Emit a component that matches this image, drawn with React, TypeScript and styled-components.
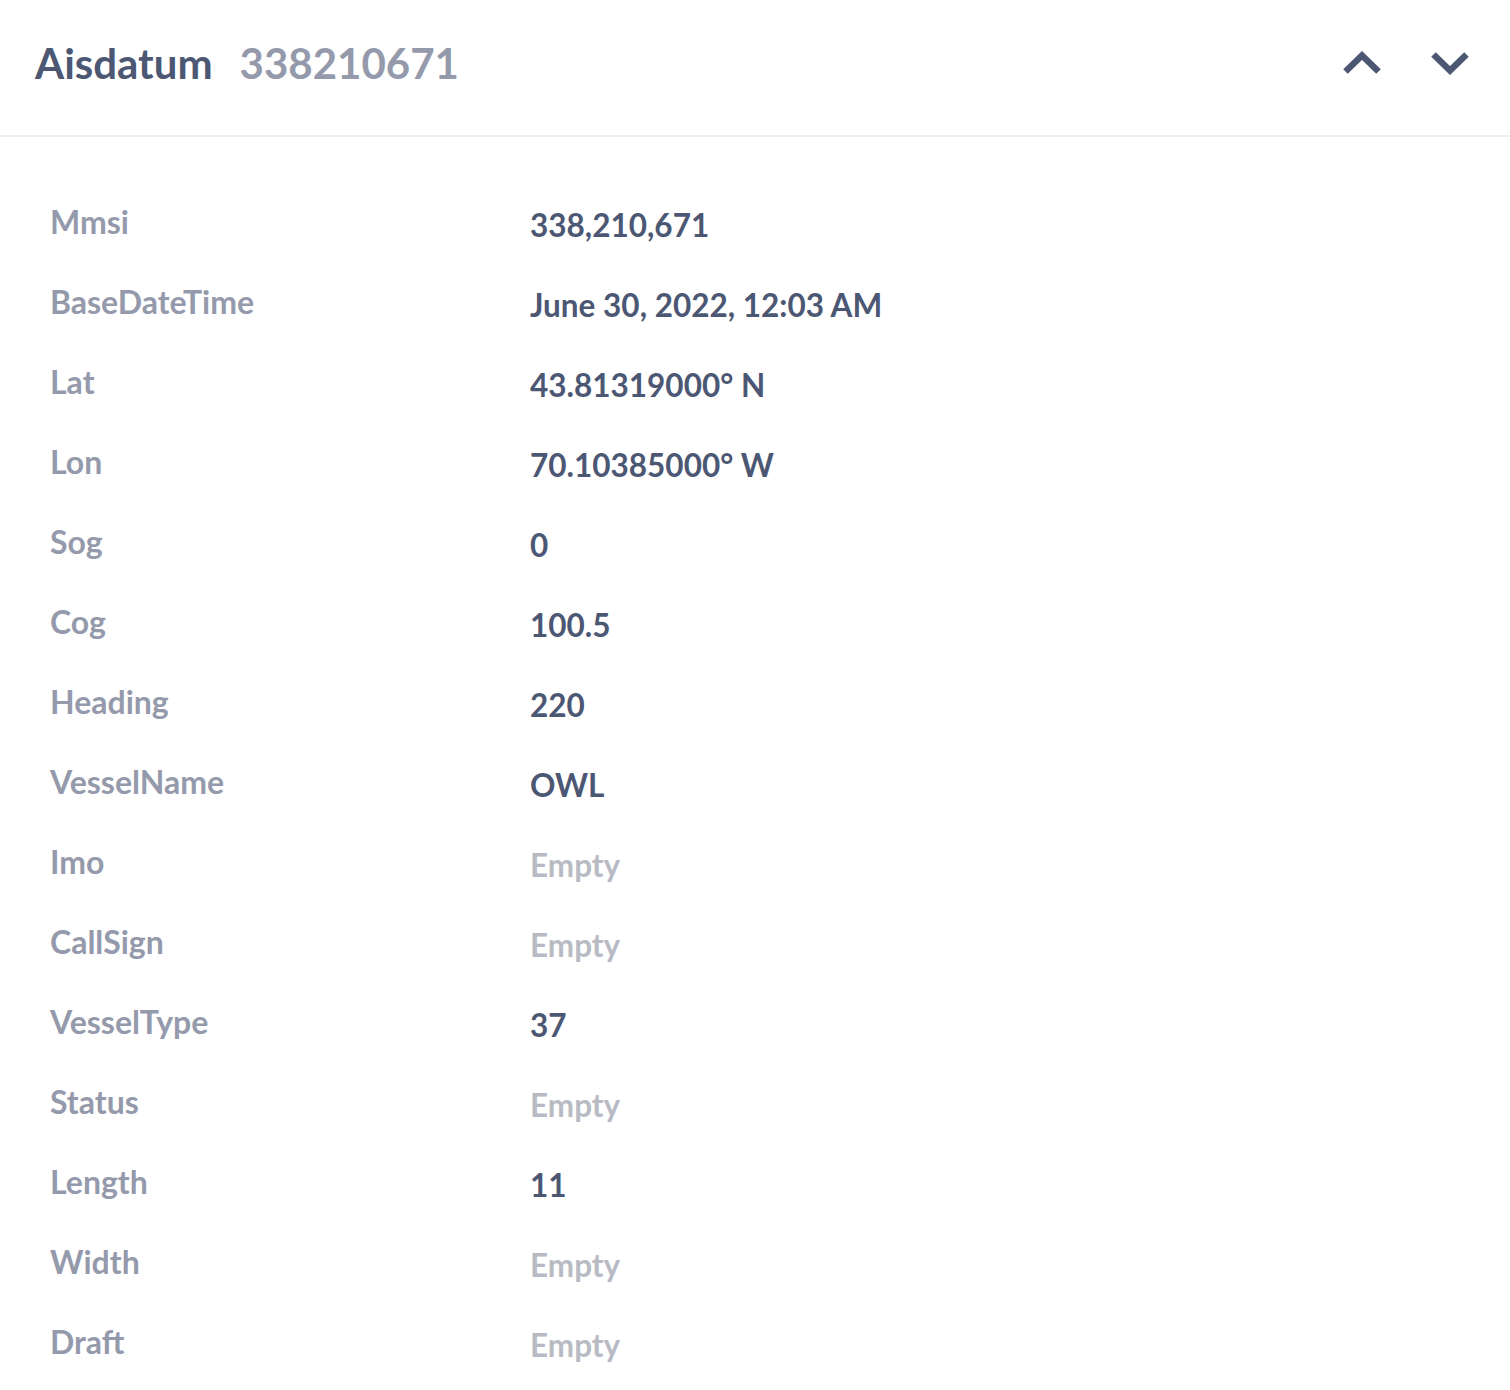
import React from "react";
import styled, { createGlobalStyle } from "styled-components";

const Global = createGlobalStyle`
  html, body { margin: 0; padding: 0; background: #ffffff; }
  body { font-family: Lato, "Noto Sans", sans-serif; }
`;

const Page = styled.div`
  width: 1510px;
  min-height: 1390px;
  background: #fff;
`;

const Header = styled.header`
  display: flex;
  align-items: center;
  justify-content: space-between;
  height: 137px;
  padding: 0 41px 10px 35px;
  border-bottom: 2px solid #eeeeee;
  box-sizing: border-box;
`;

const Title = styled.h1`
  margin: 0;
  display: flex;
  align-items: baseline;
  gap: 27px;
  font-size: 42px;
  font-weight: 700;
  color: #4c5773;
  line-height: 1;
`;

const TitleId = styled.span`
  color: #949aab;
`;

const Nav = styled.div`
  display: flex;
  align-items: center;
  gap: 50px;
`;

const NavButton = styled.button`
  border: 0;
  background: none;
  padding: 0;
  width: 38px;
  height: 40px;
  display: flex;
  align-items: center;
  justify-content: center;
  cursor: pointer;
  color: #4c5773;
`;

const Body = styled.div`
  padding: 65px 51px 0 50px;
`;

const Row = styled.div`
  display: grid;
  grid-template-columns: 480px 1fr;
  height: 80px;
  align-items: start;
`;

const Label = styled.div`
  font-size: 32px;
  font-weight: 700;
  color: #949aab;
  line-height: 40px;
`;

const Value = styled.div<{ $empty?: boolean }>`
  font-size: 31.5px;
  font-weight: 700;
  line-height: 40px;
  padding-top: 3px;
  color: ${(p) => (p.$empty ? "#b8bbc3" : "#4c5773")};
`;

const Chevron = ({ dir }: { dir: "up" | "down" }) => (
  <svg width="38" height="24" viewBox="0 0 38 24" fill="none">
    <path
      d={dir === "up" ? "M2.5 20.5 L19 4.5 L35.5 20.5" : "M2.5 3.5 L19 19.5 L35.5 3.5"}
      stroke="currentColor"
      strokeWidth="6.5"
      strokeLinecap="butt"
      strokeLinejoin="miter"
    />
  </svg>
);

const rows: [string, string | null][] = [
  ["Mmsi", "338,210,671"],
  ["BaseDateTime", "June 30, 2022, 12:03 AM"],
  ["Lat", "43.81319000° N"],
  ["Lon", "70.10385000° W"],
  ["Sog", "0"],
  ["Cog", "100.5"],
  ["Heading", "220"],
  ["VesselName", "OWL"],
  ["Imo", null],
  ["CallSign", null],
  ["VesselType", "37"],
  ["Status", null],
  ["Length", "11"],
  ["Width", null],
  ["Draft", null],
];

export default function App() {
  return (
    <Page>
      <Global />
      <Header>
        <Title>
          Aisdatum <TitleId>338210671</TitleId>
        </Title>
        <Nav>
          <NavButton aria-label="Previous">
            <Chevron dir="up" />
          </NavButton>
          <NavButton aria-label="Next">
            <Chevron dir="down" />
          </NavButton>
        </Nav>
      </Header>
      <Body>
        {rows.map(([k, v]) => (
          <Row key={k}>
            <Label>{k}</Label>
            <Value $empty={v === null}>{v ?? "Empty"}</Value>
          </Row>
        ))}
      </Body>
    </Page>
  );
}
